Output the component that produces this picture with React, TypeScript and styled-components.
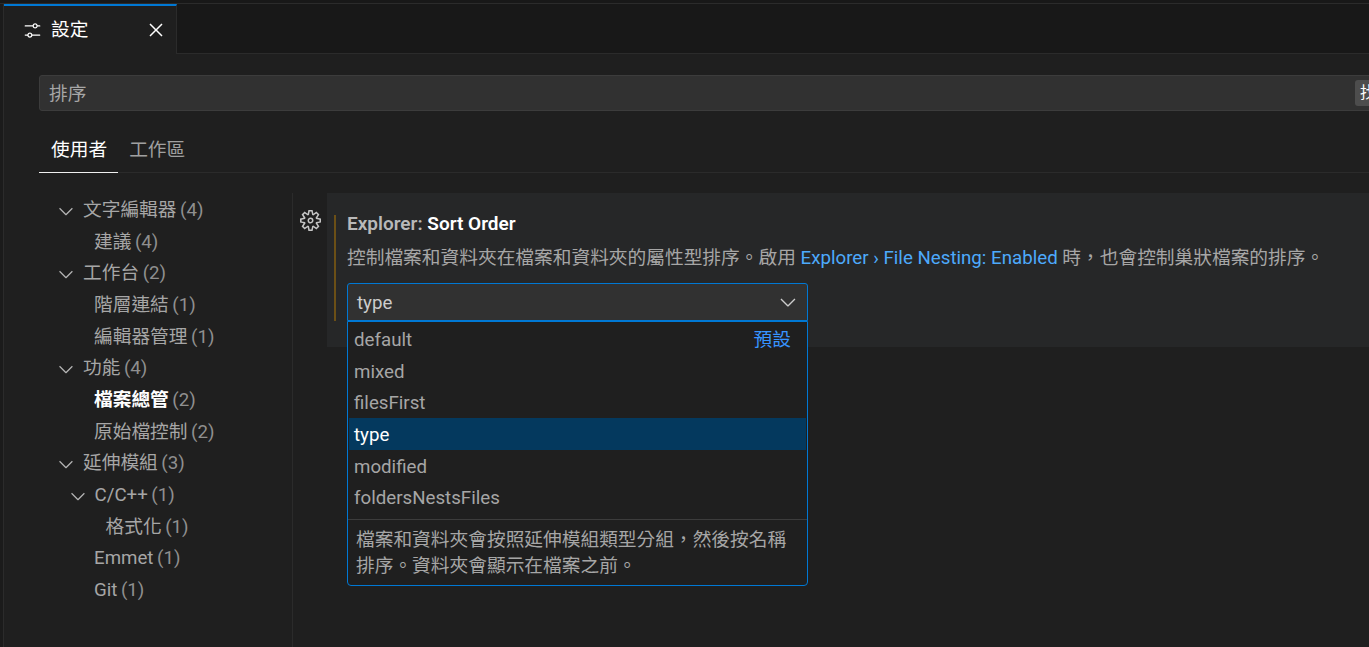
import React from 'react';
import styled, { createGlobalStyle } from 'styled-components';
import { VscChevronDown, VscClose, VscSettings, VscSettingsGear } from 'react-icons/vsc';

const UI_FONT = 'Roboto, "Noto Sans CJK TC", sans-serif';

const GlobalStyle = createGlobalStyle`
  html, body {
    margin: 0;
    height: 100%;
    overflow: hidden;
    background: #1f1f1f;
  }
  #root {
    height: 100%;
  }
`;

const Page = styled.div`
  width: 1369px;
  height: 647px;
  overflow: hidden;
  background: #1b1b1b;
  color: #cccccc;
  font-family: ${UI_FONT};
  font-size: 18.72px;
  display: flex;
  flex-direction: column;
`;

const TopStrip = styled.div`
  height: 3px;
  background: #181818;
  border-bottom: 1px solid #2b2b2b;
  flex: none;
`;

const Editor = styled.div`
  flex: 1;
  min-height: 0;
  margin-left: 3px;
  border-left: 1px solid #2b2b2b;
  background: #1f1f1f;
  display: flex;
  flex-direction: column;
`;

const TabBar = styled.div`
  height: 50px;
  flex: none;
  display: flex;
  background: #181818;
  box-shadow: inset 0 -1px 0 #2b2b2b;
`;

const Tab = styled.div`
  width: 173px;
  box-sizing: border-box;
  background: #1f1f1f;
  border-top: 2px solid #0078d4;
  border-right: 1px solid #2b2b2b;
  display: flex;
  align-items: center;
  padding: 0 8px 0 18px;
  color: #ffffff;
`;

const TabTitle = styled.span`
  flex: 1;
  margin-left: 8px;
  line-height: 24px;
`;

const Body = styled.div`
  flex: 1;
  display: flex;
  flex-direction: column;
  padding: 21px 0 0 35px;
  min-height: 0;
`;

const SearchBox = styled.div`
  width: 1347px;
  height: 36px;
  flex: none;
  box-sizing: border-box;
  background: #313131;
  border: 1px solid #3c3c3c;
  border-radius: 3px;
  display: flex;
  align-items: center;
  justify-content: space-between;
  padding: 0 0 0 9px;
  color: #a6a6a6;
  white-space: nowrap;
`;

const SearchText = styled.span`
  margin-bottom: 4px;
`;

const CountBadge = styled.span`
  width: 30px;
  height: 26px;
  line-height: 26px;
  box-sizing: border-box;
  background: #4d4d4d;
  border-radius: 3px;
  color: #ffffff;
  font-size: 15.6px;
  padding-left: 5px;
  overflow: hidden;
`;

const ScopeTabs = styled.div`
  height: 62px;
  flex: none;
  display: flex;
  align-items: flex-end;
  border-bottom: 1px solid #2b2b2b;
  box-sizing: border-box;
`;

const ScopeTab = styled.div<{ $active?: boolean }>`
  height: 46px;
  box-sizing: border-box;
  padding: 0 ${p => (p.$active ? 11 : 12)}px 0 ${p => (p.$active ? 12 : 11)}px;
  line-height: 46px;
  color: ${p => (p.$active ? '#ffffff' : '#a0a0a0')};
  margin-bottom: -1px;
  border-bottom: 1px solid ${p => (p.$active ? '#f0f0f0' : 'transparent')};
`;

const Columns = styled.div`
  flex: 1;
  display: flex;
  min-height: 0;
  padding-top: 20px;
`;

const Tree = styled.div`
  width: 254px;
  flex: none;
  box-sizing: border-box;
  padding-top: 2px;
  border-right: 1px solid #2b2b2b;
`;

const TreeRow = styled.div<{ $depth: number; $selected?: boolean }>`
  height: 31.68px;
  line-height: 31.68px;
  display: flex;
  align-items: center;
  padding-left: ${p => 16 + p.$depth * 11.5}px;
  white-space: nowrap;
  color: ${p => (p.$selected ? '#ffffff' : '#a6a6a6')};
  font-weight: ${p => (p.$selected ? 700 : 400)};
`;

const Twistie = styled.span`
  width: 28px;
  flex: none;
  display: flex;
  align-items: center;
  color: #b4b4b4;
`;

const Spacer = styled.span`
  width: 27.5px;
  flex: none;
`;

const Count = styled.span`
  font-weight: 400;
  color: #8f8f8f;
  margin-left: 3.5px;
`;

const Settings = styled.div`
  flex: 1;
  min-width: 0;
  display: flex;
`;

const GearColumn = styled.div`
  width: 34px;
  flex: none;
  display: flex;
  justify-content: center;
  padding-top: 17px;
  padding-left: 1px;
  color: #c5c5c5;
  box-sizing: border-box;
`;

const SettingCard = styled.div`
  flex: 1;
  height: 154px;
  background: #262728;
  padding: 22px 0 0 7px;
  box-sizing: border-box;
`;

const ModifiedBar = styled.div`
  border-left: 2px solid #6b4f16;
  height: 106px;
  padding-left: 11px;
  position: relative;
`;

const SettingTitle = styled.div`
  height: 18px;
  line-height: 18px;
  font-size: 19px;
  font-weight: 600;
  white-space: nowrap;
  color: #b9b9b9;
`;

const TitleStrong = styled.span`
  color: #ffffff;
`;

const Description = styled.div`
  margin-top: 13px;
  height: 24px;
  line-height: 24px;
  white-space: nowrap;
  color: #a6a6a6;
`;

const SettingLink = styled.span`
  color: #4daafc;
`;

const SelectBox = styled.div`
  margin-top: 13px;
  width: 461px;
  height: 38px;
  box-sizing: border-box;
  background: #313131;
  border: 1px solid #0078d4;
  border-radius: 3px 3px 0 0;
  display: flex;
  align-items: center;
  justify-content: space-between;
  padding: 0 7px 0 9px;
  color: #cccccc;
`;

const SelectValue = styled.span`
  margin-top: 2px;
`;

const Dropdown = styled.div`
  position: absolute;
  left: 11px;
  top: 106px;
  width: 461px;
  height: 265px;
  box-sizing: border-box;
  background: #1f1f1f;
  border: 1px solid #0078d4;
  border-radius: 0 0 4px 4px;
  z-index: 2;
`;

const Options = styled.div`
  padding: 1px 1px 6px;
  border-bottom: 1px solid #3c3c3c;
`;

const Option = styled.div<{ $selected?: boolean }>`
  height: 31.68px;
  line-height: 35.68px;
  display: flex;
  justify-content: space-between;
  padding: 0 15px 0 5px;
  background: ${p => (p.$selected ? '#04395e' : 'transparent')};
  color: ${p => (p.$selected ? '#ffffff' : '#a6a6a6')};
`;

const DefaultTag = styled.span`
  color: #3794ff;
`;

const OptionHelp = styled.div`
  padding: 7px 16px 0 8px;
  line-height: 26px;
  color: #a6a6a6;
`;

type TreeItem = {
  label: string;
  count: number;
  depth: number;
  expanded?: boolean;
  selected?: boolean;
};

const treeItems: TreeItem[] = [
  { label: '文字編輯器', count: 4, depth: 0, expanded: true },
  { label: '建議', count: 4, depth: 1 },
  { label: '工作台', count: 2, depth: 0, expanded: true },
  { label: '階層連結', count: 1, depth: 1 },
  { label: '編輯器管理', count: 1, depth: 1 },
  { label: '功能', count: 4, depth: 0, expanded: true },
  { label: '檔案總管', count: 2, depth: 1, selected: true },
  { label: '原始檔控制', count: 2, depth: 1 },
  { label: '延伸模組', count: 3, depth: 0, expanded: true },
  { label: 'C/C++', count: 1, depth: 1, expanded: true },
  { label: '格式化', count: 1, depth: 2 },
  { label: 'Emmet', count: 1, depth: 1 },
  { label: 'Git', count: 1, depth: 1 },
];

const sortOptions = ['default', 'mixed', 'filesFirst', 'type', 'modified', 'foldersNestsFiles'];

const App: React.FC = () => {
  return (
    <Page>
      <GlobalStyle />
      <TopStrip />
      <Editor>
        <TabBar>
          <Tab>
            <VscSettings size={21} />
            <TabTitle>設定</TabTitle>
            <VscClose size={24} />
          </Tab>
        </TabBar>
        <Body>
          <SearchBox>
            <SearchText>排序</SearchText>
            <CountBadge>找到 13 個設定</CountBadge>
          </SearchBox>
          <ScopeTabs>
            <ScopeTab $active>使用者</ScopeTab>
            <ScopeTab>工作區</ScopeTab>
          </ScopeTabs>
          <Columns>
            <Tree>
              {treeItems.map(item => (
                <TreeRow key={item.label} $depth={item.depth} $selected={item.selected}>
                  {item.expanded ? (
                    <Twistie>
                      <VscChevronDown size={22} />
                    </Twistie>
                  ) : (
                    <Spacer />
                  )}
                  {item.label}
                  <Count>({item.count})</Count>
                </TreeRow>
              ))}
            </Tree>
            <Settings>
              <GearColumn>
                <VscSettingsGear size={21} />
              </GearColumn>
              <SettingCard>
                <ModifiedBar>
                  <SettingTitle>
                    Explorer: <TitleStrong>Sort Order</TitleStrong>
                  </SettingTitle>
                  <Description>
                    控制檔案和資料夾在檔案和資料夾的屬性型排序。啟用 <SettingLink>Explorer › File Nesting: Enabled</SettingLink> 時，也會控制巢狀檔案的排序。
                  </Description>
                  <SelectBox>
                    <SelectValue>type</SelectValue>
                    <VscChevronDown size={24} />
                  </SelectBox>
                  <Dropdown>
                    <Options>
                      {sortOptions.map(option => (
                        <Option key={option} $selected={option === 'type'}>
                          {option}
                          {option === 'default' && <DefaultTag>預設</DefaultTag>}
                        </Option>
                      ))}
                    </Options>
                    <OptionHelp>檔案和資料夾會按照延伸模組類型分組，然後按名稱排序。資料夾會顯示在檔案之前。</OptionHelp>
                  </Dropdown>
                </ModifiedBar>
              </SettingCard>
            </Settings>
          </Columns>
        </Body>
      </Editor>
    </Page>
  );
};

export default App;
